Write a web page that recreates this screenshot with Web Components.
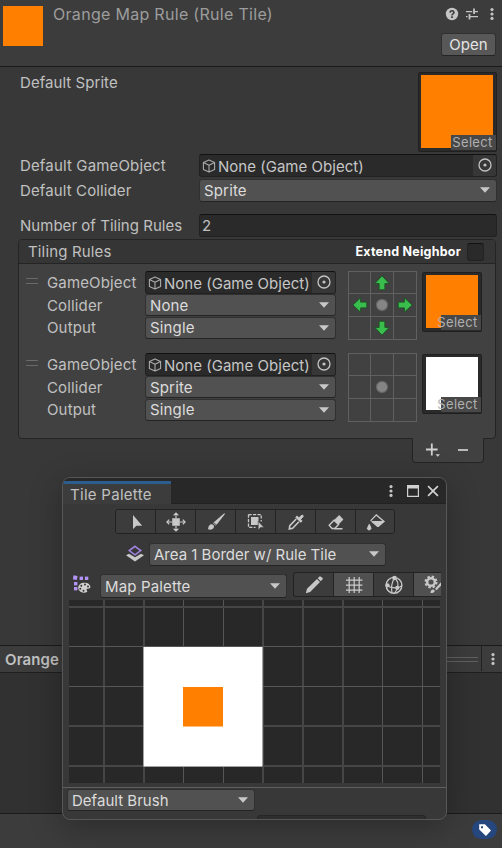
<!DOCTYPE html>
<html lang="en"><head><meta charset="utf-8"><title>Rule Tile Inspector</title>
<style>
html,body{margin:0;height:100%;overflow:hidden;background:#383838}
body{font-family:Inter,"Liberation Sans",sans-serif;font-size:15px;color:#c0c0c0}
</style></head><body>
<rule-inspector></rule-inspector>
<script>
const define=(name,css,html)=>customElements.define(name,class extends HTMLElement{
  connectedCallback(){
    if(this.shadowRoot)return;
    const a=k=>this.getAttribute(k)||'';
    const root=this.attachShadow({mode:'open'});
    root.innerHTML='<style>*{box-sizing:border-box}:host{box-sizing:border-box;display:block;flex:none}'+css+'</style>'+(typeof html==='function'?html(a):html);
  }
});
const icons={
 help:[14,14,'<circle cx="7" cy="7" r="6.2" fill="#c4c4c4"/><path d="M5.1 5.6Q5.2 3.7 7 3.7T8.9 5.4Q8.9 6.3 7.9 6.9Q7 7.4 7 8.4" fill="none" stroke="#383838" stroke-width="1.6"/><rect x="6.1" y="9.3" width="1.8" height="1.7" fill="#383838"/>'],
 sliders:[14,14,'<path d="M1 4.6H7.2M9 4.6H13M1 9.6H2.6M5 9.6H13" stroke="#c4c4c4" stroke-width="1.2"/><path d="M9 1.5V7M4.5 7V12.5" stroke="#c4c4c4" stroke-width="1.8"/>'],
 dots:[6,14,'<g fill="#c4c4c4"><circle cx="3" cy="2.6" r="1.6"/><circle cx="3" cy="7" r="1.6"/><circle cx="3" cy="11.4" r="1.6"/></g>'],
 cube:[14,14,'<path d="M7 .9L12.6 3.4V10.4L7 13.1L1.4 10.4V3.4ZM1.4 3.4L7 6.2L12.6 3.4M7 6.2V13" fill="none" stroke="#aaa" stroke-width="1.1" stroke-linejoin="round"/>'],
 target:[14,14,'<circle cx="7" cy="7" r="6" fill="none" stroke="#c4c4c4" stroke-width="1.3"/><circle cx="7" cy="7" r="1.6" fill="#c4c4c4"/>'],
 caret:[10,6,'<path d="M0 .2H10L5 5.8Z" fill="#c8c8c8"/>'],
 pointer:[20,20,'<path d="M7 3V17.1L10.5 13.8H16.2Z" fill="#c8c8c8"/>'],
 move:[20,20,'<rect x="6.2" y="6.2" width="7.6" height="7.6" fill="#c8c8c8"/><path d="M10 6V1.4M7.6 3.4L10 1L12.4 3.4M10 14V18.6M7.6 16.6L10 19L12.4 16.6M6 10H1.2M3.2 7.6L.9 10L3.2 12.4M14 10H18.8M16.8 7.6L19.1 10L16.8 12.4" fill="none" stroke="#c8c8c8" stroke-width="1.2"/>'],
 brush:[20,20,'<path d="M18.3 1.2L19 1.9L10.6 12.7L7.8 10.2Z" fill="#c8c8c8"/><path d="M2 17.3Q2.7 12 5.8 12.2Q9 13 7.6 16.1Q5.9 18.4 2 17.3Z" fill="#c8c8c8"/><path d="M7.2 10.9L9.8 13.3" stroke="#c8c8c8"/>'],
 select:[20,20,'<rect x="5" y="5" width="7.5" height="8" fill="#c8c8c8"/><path d="M2.5 2.6H15.2V9.5M2.5 2.6V15.4H9.5" fill="none" stroke="#c8c8c8" stroke-width="1.3" stroke-dasharray="3.2 1.3"/><path d="M12.2 9.2V18.2L14.4 15.6H18Z" fill="#c8c8c8" stroke="#3c3c3c" stroke-width=".6"/>'],
 picker:[20,20,'<path d="M10.2 7L3.8 13.6L3.3 16.9L6.6 16.2L12.9 9.8" fill="none" stroke="#c8c8c8" stroke-width="1.6"/><path d="M10.1 4.5L15.7 9.9" stroke="#c8c8c8" stroke-width="2.5"/><path d="M12.2 6.8L15.2 3.6Q17.1 2.2 17.2 4.4L13.9 8.2Z" fill="#c8c8c8" stroke="#c8c8c8"/>'],
 eraser:[20,20,'<path d="M3.2 13.2L8 8.2L12.5 12.5L8.8 16.5H6Z" fill="none" stroke="#c8c8c8" stroke-width="1.4"/><path d="M8.2 8L13.2 3.1L17.4 7.6L12.6 12.4Z" fill="#c8c8c8"/><path d="M8.5 16.7H16.5" stroke="#c8c8c8" stroke-width="1.4"/>'],
 bucket:[20,20,'<path d="M4.6 8.9L10.3 2.9L18 9.5L12.4 14.2Q11.8 14.7 11.2 14.1L5.6 9.2" fill="none" stroke="#c8c8c8" stroke-width="1.3"/><path d="M5.8 9H18.4L12.4 14.6Q11.8 15 11.2 14.4Z" fill="#c8c8c8"/><path d="M3.3 11.4Q5.4 14.7 5.4 16.3Q4.9 18.4 3.2 18.4T1 16.2Q1.3 14.6 3.3 11.4Z" fill="#c8c8c8"/>'],
 layers:[20,20,'<path d="M1 11.2L4 9.7L10 13.3L16 9.7L19 11.2L10 17.5Z" fill="#c8c8c8"/><path d="M10 2.3L15.8 6.6L10 10.9L4.2 6.6Z" fill="none" stroke="#a184e0" stroke-width="1.5"/>'],
 palette:[20,20,'<g fill="#b393f5"><rect x="1.3" y="1.6" width="4" height="4" transform="rotate(12 3 3)"/><rect x="7.6" y="2.6" width="3.4" height="3.4"/><rect x="12.9" y="2.6" width="3.4" height="3.4"/><rect x="2" y="8" width="3.4" height="3.4"/><rect x="2" y="13" width="3.4" height="3.4"/></g><path d="M11.3 8.8Q17.4 8.1 18.5 13Q18.6 15 14.9 14.7Q13.8 15.3 15.4 17.6Q12.4 20 8.1 17.5Q4.6 14.3 7.4 10.8Q8.8 9 11.3 8.8Z" fill="#d0d0d0"/><g fill="#343434"><circle cx="9.3" cy="11.7" r="1"/><circle cx="13" cy="10.6" r="1"/><circle cx="16" cy="12.5" r="1"/><circle cx="8.3" cy="14.8" r="1"/><circle cx="11.5" cy="16.8" r="1"/></g>'],
 pencil:[20,20,'<path d="M1.8 18.2L3 13.8L13 3.9L16 6.9L6.1 17ZM13.7 3.2L15.8 1.2Q16.4.9 18.6 3Q19.1 3.7 18.6 4.3L16.7 6.2Z" fill="#c8c8c8"/>'],
 grid:[20,20,'<path d="M5.2 2V18M10.2 2V18M15.2 2V18M2 5.2H18.4M2 10.2H18.4M2 15.2H18.4" stroke="#ccc" stroke-width="1.2"/>'],
 gizmo:[20,20,'<circle cx="10" cy="10.3" r="7.9" fill="none" stroke="#c8c8c8" stroke-width="1.4"/><path d="M10.5 3Q15.4 7 13.3 12.8Q12.5 16 10.5 18M2.5 10.3Q7 13.5 13.3 12.8Q16 12.3 17.8 10.6M10.5 3Q6.5 9 8 17.8" fill="none" stroke="#c8c8c8" stroke-width="1.2"/><g fill="#c8c8c8"><circle cx="10.5" cy="3" r="2.3"/><circle cx="3.5" cy="10.3" r="2.1"/><circle cx="13.3" cy="12.8" r="2.1"/></g>'],
 gear:[20,20,'<circle cx="7" cy="7" r="3.8" fill="none" stroke="#c8c8c8" stroke-width="2.4"/><circle cx="7" cy="7" r="5.4" fill="none" stroke="#c8c8c8" stroke-width="2.2" stroke-dasharray="2.4 1.84"/><path d="M20 6.8L10.5 16" stroke="#505050" stroke-width="4.5"/><path d="M19 6.8L11.8 14.5" stroke="#c8c8c8" stroke-width="2.2"/><path d="M6.4 17.8Q7 14.3 9.3 14.5Q11.8 15.7 10 17.3Q8.7 18.6 6.4 17.8Z" fill="#c8c8c8"/>'],
 max:[12,12,'<path d="M.6.6H11.4V11.4H.6Z" fill="none" stroke="#d0d0d0" stroke-width="1.2"/><path d="M0 0H12V3.4H0Z" fill="#d0d0d0"/>'],
 close:[12,12,'<path d="M1.1 1.1L10.9 10.9M10.9 1.1L1.1 10.9" stroke="#d0d0d0" stroke-width="1.7"/>'],
 plus:[16,16,'<path d="M2 7.5H13.6M7.8 1.6V13.4" stroke="#d0d0d0" stroke-width="1.8"/><path d="M11.5 12.2H16L13.75 14.8Z" fill="#d0d0d0"/>'],
 minus:[12,4,'<path d="M1 2H11" stroke="#d0d0d0" stroke-width="1.7"/>'],
 tag:[14,14,'<path d="M1.2 1.2H6.9L13 7.4L8 13L1.2 6.5ZM3 3.2V5.2H5V3.2Z" fill="#fff" fill-rule="evenodd"/>'],
 arrow:[16,16,'<path d="M8 .8L15.2 8.6H10.9V14.8H5.1V8.6H.8Z" fill="#39bd4d" stroke="#1f5527" stroke-width="1"/>'],
 blank:[16,16,'<circle cx="8" cy="8" r="6.2" fill="#636363"/><circle cx="8" cy="8" r="5" fill="#858585"/>']
};
define('ui-icon',':host{line-height:0}svg{display:block}',a=>{const[w,h,g]=icons[a('name')];const r=a('turn');
  return `<svg width="${w}" height="${h}" viewBox="0 0 ${w} ${h}">${r?`<g transform="rotate(${r} 8 8)">${g}</g>`:g}</svg>`});
define('ui-label',':host{line-height:22px;white-space:nowrap;letter-spacing:var(--ls,.15px)}','<slot></slot>');
define('drop-down',`:host{display:flex;align-items:center;height:23px;border:1px solid #303030;border-bottom-color:#242424;border-radius:3px;background:#515151;color:#dcdcdc;padding:0 6px 0 4px}
 ui-label{flex:1;line-height:21px}ui-icon{margin-bottom:var(--cb,0px)}`,'<ui-label><slot></slot></ui-label><ui-icon name="caret"></ui-icon>');
define('object-field',`:host{display:flex;height:23px;border:1px solid #212121;border-top-color:#111;border-radius:3px;background:#2a2a2a;overflow:hidden;color:#c6c6c6}
 .c{margin:4px 2px 0 2px}ui-label{flex:1;line-height:23px;letter-spacing:.02px}.p{width:23px;background:#373737;padding:3px 0 0 4.5px}`,
 '<ui-icon class="c" name="cube"></ui-icon><ui-label><slot></slot></ui-label><div class="p"><ui-icon name="target"></ui-icon></div>');
define('sprite-slot',`:host{display:grid;background:#2a2a2a;border:1px solid #202020;border-radius:2px;padding:2px 3px 3px var(--pl,3px)}
 .s,.l{grid-area:1/1}.s{background:var(--sprite)}.l{justify-self:end;align-self:end;width:var(--lw,40px);height:15px;margin:0 -3px -2px 0;background:#484848;color:#b0b0b0;font-size:13px;line-height:15px;letter-spacing:.3px;display:flex;justify-content:flex-end;padding-right:3.5px;white-space:nowrap}`,
 '<div class="s"></div><div class="l">Select</div>');
define('neighbor-grid',`:host{width:69px;height:69px;border:1px solid #606060;display:grid;grid-template:repeat(3,1fr)/repeat(3,1fr)}
 div{display:grid;place-items:center;border-right:1px solid #606060;border-bottom:1px solid #606060}div:nth-of-type(3n){border-right:0}div:nth-of-type(n+7){border-bottom:0}`,
 a=>{const on=a('mode')==='cross',m={1:0,3:270,5:90,7:180};let s='';
 for(let i=0;i<9;i++)s+='<div>'+(i===4?'<ui-icon name="blank"></ui-icon>':on&&i in m?`<ui-icon name="arrow" turn="${m[i]||360}"></ui-icon>`:'')+'</div>';return s});
define('tiling-rule',`:host{display:flex;height:68px;align-items:flex-start}
 .h{width:12px;height:6px;border:solid #6a6a6a;border-width:1px 0;margin:7px 9px 0 7px}
 .l{width:98px}.l ui-label{height:23px;line-height:24px}.l ui-label:last-child{height:22px;margin-top:-.6px}
 .f{width:191px;margin-right:12px}drop-down{height:22px}drop-down+drop-down{margin-top:.6px}
 sprite-slot{width:60px;height:60px;margin:1px 0 0 5px}`,
 a=>`<div class="h"></div><div class="l"><ui-label>GameObject</ui-label><ui-label>Collider</ui-label><ui-label>Output</ui-label></div>
 <div class="f"><object-field>None (Game Object)</object-field><drop-down>${a('collider')}</drop-down><drop-down>Single</drop-down></div>
 <neighbor-grid mode="${a('mode')}"></neighbor-grid><sprite-slot style="--sprite:${a('sprite')}"></sprite-slot>`);
define('rule-list',`:host{width:478px;height:223px}
 .b{height:200px;border:1px solid #242424;border-radius:4px;background:#414141}
 .t{height:24px;background:#353535;border-bottom:1px solid #242424;border-radius:3px 3px 0 0;display:flex;align-items:center;padding:0 11px 0 9px}
 .t ui-label{flex:1}.e{color:#fff;font-weight:700;font-size:12.5px;letter-spacing:.22px;margin-right:6px}
 .x{width:17px;height:18px;background:#2a2a2a;border:1px solid #222;border-top-color:#111;border-radius:3px}
 tiling-rule{margin-top:7px}tiling-rule+tiling-rule{margin-top:14px}
 .a{width:72px;height:25px;margin:-1px 12px 0 auto;background:#414141;border:1px solid #242424;border-top:0;border-radius:0 0 4px 4px;display:flex;justify-content:space-between;align-items:center;padding:0 14px 1px 11px;position:relative}`,
 `<div class="b"><div class="t"><ui-label>Tiling Rules</ui-label><span class="e">Extend Neighbor</span><div class="x"></div></div>
 <tiling-rule collider="None" mode="cross" sprite="#ff8000"></tiling-rule><tiling-rule collider="Sprite" sprite="#fff"></tiling-rule></div>
 <div class="a"><ui-icon name="plus"></ui-icon><ui-icon name="minus"></ui-icon></div>`);
define('tool-bar',`:host{display:flex;height:25px;border:1px solid #222;border-radius:3px;overflow:hidden}
 div{width:40px;flex:none;display:grid;place-items:center;border-right:1px solid #242424;background:#3c3c3c}div.on{background:#505050}div:last-child{border:0}`,
 a=>a('items').split(' ').map(n=>{const on=n[0]==='+';return `<div class="${on?'on':''}"><ui-icon name="${on?n.slice(1):n}"></ui-icon></div>`}).join(''));
define('tile-canvas',`:host{height:183px;background:#282828;overflow:hidden}svg{display:block}`,()=>{
 let s='';const bar=(x,y,w,h,thick)=>`<rect x="${x}" y="${y}" width="${w}" height="${h}" fill="${thick?'#464646':'#565656'}"/>`;
 for(const[x,w]of[[34,2],[74,2],[114,1],[154,1],[193,2],[233,2],[273,2],[313,1],[353,1]])s+=bar(x,0,w,183,w>1);
 for(const[y,w]of[[6,2],[46,1],[86,1],[125,2],[165,2]])s+=bar(0,y,371,w,w>1);
 return `<svg width="371" height="183">${s}<rect x="74.5" y="47" width="119" height="119.5" fill="#fff"/><rect x="114" y="87" width="40" height="40" fill="#ff8000"/><path d="M114 126.5H154" stroke="#ffbd78"/></svg>`});
define('palette-window',`:host{position:absolute;left:62px;top:477px;width:385px;height:343px;border:1px solid #575757;border-radius:8px;background:#383838;overflow:hidden;box-shadow:0 8px 32px rgba(0,0,0,.27);display:flex;flex-direction:column;align-items:stretch}
 .t{height:26px;background:#282828;border-bottom:1px solid #222;display:flex;align-items:center;flex:none}
 .tab{width:108px;height:23px;margin-top:3px;border-top:3px solid #2c5d8f;background:#3c3c3c;padding-left:7px}.tab ui-label{line-height:21px;--ls:.28px}
 .sp{flex:1}.t ui-icon{margin-right:8px}.t ui-icon:last-child{margin-right:7px}.t .d{margin-right:13px}
 .one{display:flex;padding:5px 0 0 52px}.one tool-bar{width:280px}
 .two{display:flex;padding:9px 0 0 62px}.two ui-icon{margin:1px 4px 0 0}.two drop-down{width:237px;--ls:0px;--cb:1px}
 .three{display:flex;height:34px;padding:6px 6px 0 9px;overflow:hidden}.three drop-down{width:187px;height:24px;margin:2px 6px 0 8px}.three ui-icon{margin-top:2px}.three tool-bar{width:148px;border-radius:3px 0 0 3px;border-right:0}
 tile-canvas{margin:0 6px}.bot{height:32px;margin-top:4px;border-top:1px solid #606060;padding:1px 4px 0}.bot drop-down{width:188px;height:22px;--ls:.02px}
 .edge{width:169px;height:6px;background:#2e2e2e;border:1px solid #252525;border-radius:3px;margin:4px 0 0 190px}`,
 `<div class="t"><div class="tab"><ui-label>Tile Palette</ui-label></div><div class="sp"></div><ui-icon class="d" name="dots"></ui-icon><ui-icon name="max"></ui-icon><ui-icon name="close"></ui-icon></div>
 <div class="one"><tool-bar items="pointer move brush select picker eraser bucket"></tool-bar></div>
 <div class="two"><ui-icon name="layers"></ui-icon><drop-down>Area 1 Border w/ Rule Tile</drop-down></div>
 <div class="three"><ui-icon name="palette"></ui-icon><drop-down>Map Palette</drop-down><tool-bar items="pencil +grid gizmo +gear"></tool-bar></div>
 <tile-canvas></tile-canvas><div class="bot"><drop-down>Default Brush</drop-down><div class="edge"></div></div>`);
define('inspector-header',`:host{display:flex;height:67px;background:#3c3c3c;border-bottom:1px solid #1a1a1a;padding:6px 6px 0 3px}
 .q{width:40px;height:40px;background:#ff8000;margin-right:10px}.n{flex:1;font-size:16px;color:#9c9c9c;line-height:17px;--ls:.3px}
 .r{display:flex;flex-direction:column;align-items:flex-end}.i{display:flex;gap:6px;padding:1px 1px 0 0;height:27px}.i ui-icon:last-child{margin-left:4px}
 .o{width:55px;height:23px;background:#585858;border:1px solid #303030;border-bottom-color:#242424;border-radius:3px;color:#e4e4e4;text-align:center}.o ui-label{line-height:21px;--ls:0px}`,
 `<div class="q"></div><ui-label class="n">Orange Map Rule (Rule Tile)</ui-label><div class="r"><div class="i"><ui-icon name="help"></ui-icon><ui-icon name="sliders"></ui-icon><ui-icon name="dots"></ui-icon></div><div class="o"><ui-label>Open</ui-label></div></div>`);
define('property-row',`:host{display:flex;padding:0 5px 0 20px}ui-label{width:179px;line-height:var(--lh,24px);letter-spacing:var(--rs,.12px)}div{flex:1}`,a=>`<ui-label>${a('label')}</ui-label><div><slot></slot></div>`);
define('preview-pane',`:host{height:203px;border-top:1px solid #1a1a1a;background:#313131;display:flex;flex-direction:column}
 .h{height:27px;background:#3c3c3c;border-bottom:1px solid #1f1f1f;display:flex;padding-left:5px}.h ui-label{flex:1;font-weight:600;line-height:28px;--ls:.1px}
 .g{width:40px;height:5px;border:solid #606060;border-width:1px 0;margin:11px 3px 0 0}.d{width:21px;height:25px;border-left:1px solid #222;display:grid;place-items:center}.d ui-icon{margin-left:2px}
 .p{flex:1}.f{height:35px;background:#3c3c3c;border-top:1px solid #1a1a1a;padding:6px 5px 0}
 .b{width:25px;height:19px;border-radius:10px;background:#25477d;margin-left:auto;display:grid;place-items:center}`,
 `<div class="h"><ui-label>Orange</ui-label><div class="g"></div><div class="d"><ui-icon name="dots"></ui-icon></div></div><div class="p"></div><div class="f"><div class="b"><ui-icon name="tag"></ui-icon></div></div>`);
define('rule-inspector',`:host{position:relative;width:502px;height:848px;overflow:hidden;background:#383838;display:flex;flex-direction:column}
 .a{height:87px;padding-top:4px;--rs:.05px;--lh:24px}.a sprite-slot{width:79px;height:80px;margin:1px 0 0 auto;--lw:45px;--pl:2px}
 .b{height:25px;--rs:.15px}.c{height:35px;--cb:2px}.d{height:25px;--rs:.03px}
 .n{height:23px;border:1px solid #212121;border-top-color:#111;border-radius:3px;background:#2a2a2a;line-height:22px;padding-left:2px}
 rule-list{margin-left:18px}.z{flex:1}`,
 `<inspector-header></inspector-header>
 <property-row class="a" label="Default Sprite"><sprite-slot style="--sprite:#ff8000"></sprite-slot></property-row>
 <property-row class="b" label="Default GameObject"><object-field>None (Game Object)</object-field></property-row>
 <property-row class="c" label="Default Collider"><drop-down>Sprite</drop-down></property-row>
 <property-row class="d" label="Number of Tiling Rules"><div class="n">2</div></property-row>
 <rule-list></rule-list><div class="z"></div><preview-pane></preview-pane><palette-window></palette-window>`);
</script></body></html>
